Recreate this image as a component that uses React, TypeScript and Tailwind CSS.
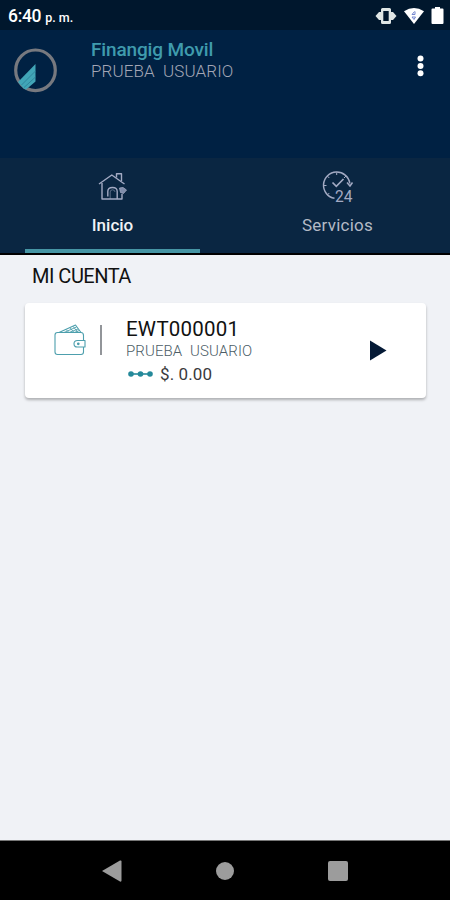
function LogoMark() {
  return (
    <svg width="44" height="46" viewBox="0 0 44 46" fill="none">
      <ellipse
        cx="21.5"
        cy="22.3"
        rx="19.8"
        ry="20.3"
        stroke="#77797f"
        strokeWidth="3.2"
      />
      <path d="M9.5 40.5 4 34 21.5 16V33.5L12 41.5Z" fill="#41a5b7" />
      <path
        d="M7.5 37 21.5 23M10 39.5 21.5 29"
        stroke="#2a7d96"
        strokeWidth="0.8"
      />
    </svg>
  );
}

function HouseIcon() {
  return (
    <svg
      width="32"
      height="30"
      viewBox="0 0 32 30"
      fill="none"
      stroke="#a3aac3"
      strokeWidth="1.4"
      strokeLinejoin="round"
    >
      <path d="M2 12 14.8 3 27.5 12" />
      <path d="M19.5 5.5V1.8H24.5V9" />
      <path d="M5 11V27H25V22" />
      <path d="M10.8 24.5V19.5Q10.8 15.5 15.5 15.5T20.2 19.5V27" />
      <path d="M13.2 27V20Q13.2 17.8 15.5 17.8T18 20" strokeWidth="0.5" />
      <path
        d="M22.5 16 26 15.5 29.5 18 26.5 21.5 23.5 20.5Z"
        fill="#7f8caa"
        strokeWidth="0.8"
      />
    </svg>
  );
}

function Clock24Icon() {
  return (
    <svg
      width="34"
      height="36"
      viewBox="0 0 34 36"
      fill="none"
      stroke="#a3aac3"
      strokeWidth="1.5"
    >
      <path d="M13.5 29.3A13.2 13.2 0 1 1 28.8 14.5" />
      <path d="M26 13.5 29 17 31.5 13.5" />
      <path d="M11.5 13.5 15.3 17.3 22.5 10" strokeWidth="1.7" />
      <path
        d="M15.7 3.5V6M2.5 16.5H5.5M6.3 7 8.3 9M25 7 23 9M6.3 26 8.3 24"
        strokeWidth="1"
      />
      <text
        x="14"
        y="32.5"
        className="font-['Roboto',sans-serif] text-[17px]"
        fill="#a3aac3"
        stroke="none"
        textLength="17.5"
        lengthAdjust="spacingAndGlyphs"
      >
        24
      </text>
    </svg>
  );
}

function WalletIcon() {
  return (
    <svg
      width="32"
      height="32"
      viewBox="0 0 32 32"
      fill="none"
      stroke="#4d9fad"
      strokeWidth="1.1"
      strokeLinejoin="round"
    >
      <path d="M6 8.5H3.5Q1 8.5 1 11V28Q1 30.5 3.5 30.5H27Q29.5 30.5 29.5 28V23M29.5 17V11.5Q29.5 8.5 27 8.5H5" />
      <path d="M5 8.5 21.5 1 27 8.5" />
      <path
        d="M10 8.5 22.5 3M15 8.5 24 5M20 8.5 25.5 6.5M12 5.5 15 8.5M16 3.7 20 8.5M19 2.3 24 8.5"
        strokeWidth="0.9"
      />
      <path d="M31 16.5H23.5Q20 16.5 20 19.8T23.5 23H31Z" />
      <circle cx="24.3" cy="19.8" r="0.8" fill="#2c8e9f" />
    </svg>
  );
}

function StatusBar() {
  return (
    <div className="flex h-[30px] items-center justify-between bg-[#00172d] pr-1.5 pl-2 text-white">
      <div className="flex items-baseline gap-1 pt-[3px] font-medium">
        <span className="text-[17.5px] leading-5 tracking-[-0.3px]">6:40</span>
        <span className="text-[12.5px] leading-5">p. m.</span>
      </div>
      <div className="flex items-center gap-[7px] pt-px">
        <svg width="22" height="16" viewBox="0 0 22 16" fill="#dfe6e5">
          <path d="M.5 8 4 4H6V12H4ZM21.5 8 18 4H16V12H18Z" />
          <path
            d="M7.5 0H14.5Q16 0 16 1.5V14.5Q16 16 14.5 16H7.5Q6 16 6 14.5V1.5Q6 0 7.5 0ZM8.3 3V13H13.7V3Z"
            fillRule="evenodd"
          />
        </svg>
        <svg width="20" height="16" viewBox="0 0 20 16">
          <path d="M0 3.2Q10-3 20 3.2L10 16Z" fill="#fff" />
          <path
            d="M10.5 3.5 8 6.5H11V3.5M8 9H11.5L10 11.5Z"
            stroke="#7486cf"
            fill="none"
          />
        </svg>
        <svg width="13" height="17" viewBox="0 0 13 17" fill="#fff">
          <path d="M4 0H9V1.5H11.5Q12.5 1.5 12.5 2.5V16Q12.5 17 11.5 17H1.5Q.5 17 .5 16V2.5Q.5 1.5 1.5 1.5H4Z" />
        </svg>
      </div>
    </div>
  );
}

function Header() {
  return (
    <header className="flex h-32 items-start bg-[#002143] pl-[14px]">
      <div className="w-[77px] pt-[18px]">
        <LogoMark />
      </div>
      <div className="flex-1 whitespace-nowrap">
        <h1 className="pt-[9px] text-[19px] leading-[22px] font-medium tracking-[-0.15px] text-[#3f9bad]">
          Finangig Movil
        </h1>
        <p className="text-[17px] leading-[21px] font-light tracking-[0.1px] text-[#a3a6b5] [word-spacing:4px]">
          PRUEBA USUARIO
        </p>
      </div>
      <button type="button" aria-label="Menú" className="pt-[25px] pr-[26px]">
        <svg width="7" height="22" viewBox="0 0 7 22" fill="#fff">
          <circle cx="3.5" cy="3.5" r="3" />
          <circle cx="3.5" cy="11" r="3" />
          <circle cx="3.5" cy="18.3" r="3" />
        </svg>
      </button>
    </header>
  );
}

function Tabs() {
  return (
    <nav className="grid h-[97px] grid-cols-2 border-b-2 border-black bg-[#0a2642] px-[25px] text-[17px]">
      <button
        type="button"
        className="mr-[25px] flex flex-col items-center border-b-4 border-[#4695a4] font-medium text-[#f0f2f5]"
      >
        <span className="flex h-[55px] items-center pt-0.5">
          <HouseIcon />
        </span>
        <span className="leading-[24px]">Inicio</span>
      </button>
      <button
        type="button"
        className="ml-[25px] flex flex-col items-center text-[#b3bac6]"
      >
        <span className="flex h-[55px] items-center pt-0.5">
          <Clock24Icon />
        </span>
        <span className="leading-[24px] tracking-[0.25px]">Servicios</span>
      </button>
    </nav>
  );
}

function AccountCard() {
  return (
    <div className="flex h-[95px] rounded bg-white shadow-[0_2px_3px_rgba(0,0,0,0.28)]">
      <div className="flex w-[101px] items-start gap-[14px] pt-[21px] pl-[29px]">
        <WalletIcon />
        <div className="mt-px h-[30px] w-0.5 bg-[#929599]" />
      </div>
      <div className="flex-1 whitespace-nowrap pt-[14px]">
        <p className="text-[20.5px] leading-6 tracking-[0.2px] text-[#111]">
          EWT000001
        </p>
        <p className="text-[15px] leading-5 font-light tracking-[0.1px] text-[#4c5d66] [word-spacing:4px]">
          PRUEBA USUARIO
        </p>
        <div className="flex items-center gap-[7px] pt-px pl-0.5">
          <svg width="25" height="8" viewBox="0 0 25 8" fill="#25899a">
            <path d="M3 3.2H22V4.8H3Z" />
            <circle cx="3" cy="4" r="2.8" />
            <circle cx="12.5" cy="4" r="2.8" />
            <circle cx="22" cy="4" r="2.8" />
          </svg>
          <span className="text-[17px] leading-6 tracking-[0.1px] text-[#3a3a3c]">
            $. 0.00
          </span>
        </div>
      </div>
      <button type="button" aria-label="Ver cuenta" className="pr-[39px]">
        <svg width="18" height="22" viewBox="0 0 18 22">
          <path d="M1 .5 17.5 10.5 1 20.5Z" fill="#051a36" />
        </svg>
      </button>
    </div>
  );
}

function NavigationBar() {
  return (
    <div className="flex h-[60px] items-center justify-between border-t border-[#777] bg-black px-[102px]">
      <svg width="20" height="22" viewBox="0 0 20 22" fill="#9c9c9c">
        <path d="M0 11 18 .5Q19.5 0 19.5 1.5V20.5Q19.5 22 18 21.5Z" />
      </svg>
      <div className="size-[18px] rounded-full bg-[#9c9c9c]" />
      <div className="size-5 rounded-[2px] bg-[#9c9c9c]" />
    </div>
  );
}

export default function App() {
  return (
    <div className="flex h-[900px] w-[450px] flex-col overflow-hidden bg-[#f0f2f6] font-['Roboto',sans-serif]">
      <StatusBar />
      <Header />
      <Tabs />
      <main className="flex-1 pt-[9px] pr-6 pl-[25px]">
        <h2 className="mb-[15px] pl-[7px] text-[20px] leading-6 tracking-[-0.5px] text-[#111]">
          MI CUENTA
        </h2>
        <AccountCard />
      </main>
      <NavigationBar />
    </div>
  );
}
